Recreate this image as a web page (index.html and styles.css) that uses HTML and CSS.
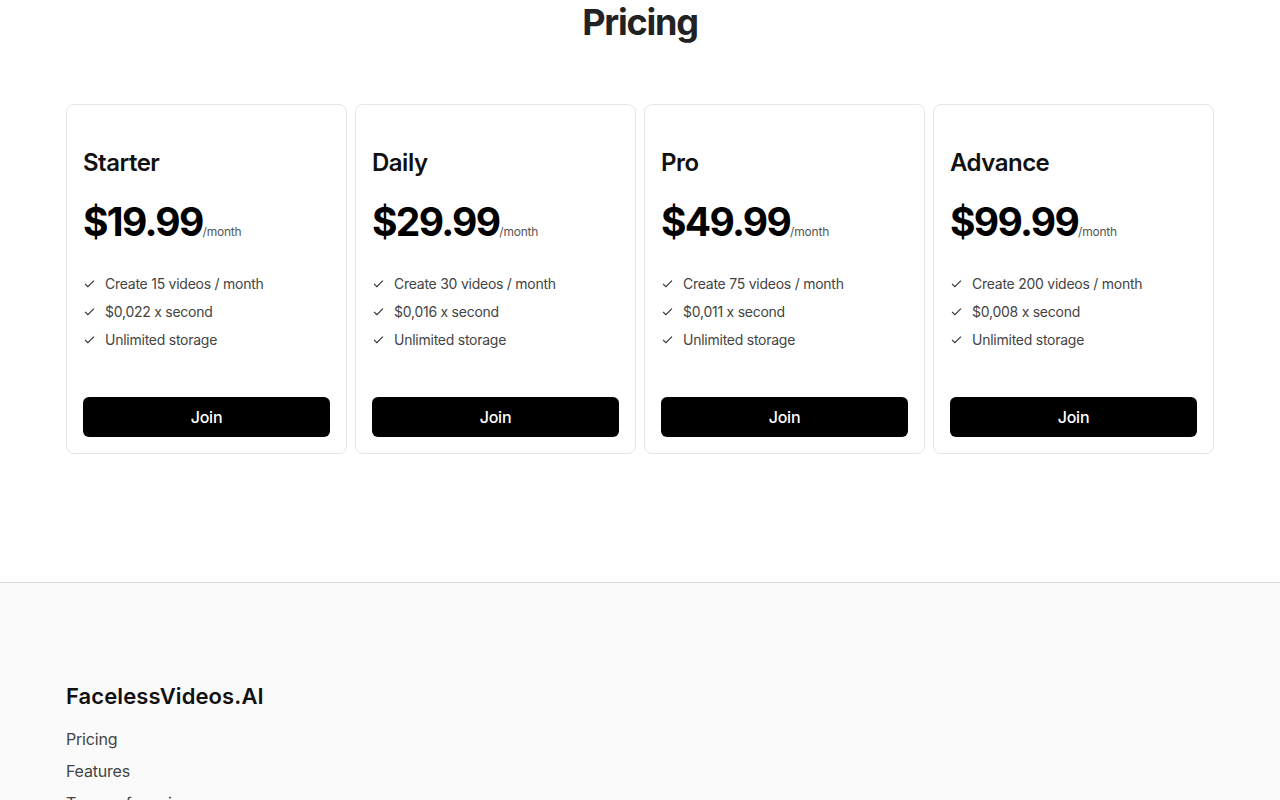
FILE: index.html
```html
<html>
<head>
<meta charset="utf-8">
<link rel="stylesheet" href="styles.css">
</head>
<body>
	<section class="pricing">
		<h1>Pricing</h1>

		<div class="plans">
			<div class="plan">
				<div class="badge"></div>
				<h2>Starter</h2>
				<div class="price">$19.99<span>/month</span></div>
				<ul>
					<li><svg viewBox="0 0 16 16"><path d="M2.5 8.5l3.5 3.5 7.5-7.5"/></svg>Create 15 videos / month</li>
					<li><svg viewBox="0 0 16 16"><path d="M2.5 8.5l3.5 3.5 7.5-7.5"/></svg>$0,022 x second</li>
					<li><svg viewBox="0 0 16 16"><path d="M2.5 8.5l3.5 3.5 7.5-7.5"/></svg>Unlimited storage</li>
				</ul>
				<button>Join</button>
			</div>

			<div class="plan">
				<div class="badge"></div>
				<h2>Daily</h2>
				<div class="price">$29.99<span>/month</span></div>
				<ul>
					<li><svg viewBox="0 0 16 16"><path d="M2.5 8.5l3.5 3.5 7.5-7.5"/></svg>Create 30 videos / month</li>
					<li><svg viewBox="0 0 16 16"><path d="M2.5 8.5l3.5 3.5 7.5-7.5"/></svg>$0,016 x second</li>
					<li><svg viewBox="0 0 16 16"><path d="M2.5 8.5l3.5 3.5 7.5-7.5"/></svg>Unlimited storage</li>
				</ul>
				<button>Join</button>
			</div>

			<div class="plan">
				<div class="badge"></div>
				<h2>Pro</h2>
				<div class="price">$49.99<span>/month</span></div>
				<ul>
					<li><svg viewBox="0 0 16 16"><path d="M2.5 8.5l3.5 3.5 7.5-7.5"/></svg>Create 75 videos / month</li>
					<li><svg viewBox="0 0 16 16"><path d="M2.5 8.5l3.5 3.5 7.5-7.5"/></svg>$0,011 x second</li>
					<li><svg viewBox="0 0 16 16"><path d="M2.5 8.5l3.5 3.5 7.5-7.5"/></svg>Unlimited storage</li>
				</ul>
				<button>Join</button>
			</div>

			<div class="plan">
				<div class="badge"></div>
				<h2>Advance</h2>
				<div class="price">$99.99<span>/month</span></div>
				<ul>
					<li><svg viewBox="0 0 16 16"><path d="M2.5 8.5l3.5 3.5 7.5-7.5"/></svg>Create 200 videos / month</li>
					<li><svg viewBox="0 0 16 16"><path d="M2.5 8.5l3.5 3.5 7.5-7.5"/></svg>$0,008 x second</li>
					<li><svg viewBox="0 0 16 16"><path d="M2.5 8.5l3.5 3.5 7.5-7.5"/></svg>Unlimited storage</li>
				</ul>
				<button>Join</button>
			</div>
		</div>
	</section>

	<footer>
		<div class="brand">FacelessVideos.AI</div>
		<nav>
			<a href="#">Pricing</a>
			<a href="#">Features</a>
			<a href="#">Terms of service</a>
			<a href="#">Privacy policy</a>
		</nav>
	</footer>
</body>
</html>
```

FILE: styles.css
```css
body {
	margin: 0;
	font-family: Inter, 'Noto Sans', sans-serif;
	font-size: 16px;
	color: #111;
	background: #fff;
}

.pricing {
	padding: 0 66px 128px;
}

h1 {
	margin: 0;
	text-align: center;
	font-size: 36px;
	line-height: 44px;
	font-weight: 700;
	letter-spacing: -1.2px;
	color: #222;
}

.plans {
	display: grid;
	grid-template-columns: repeat(4, 1fr);
	gap: 8px;
	margin-top: 60px;
}

.plan {
	display: flex;
	flex-direction: column;
	padding: 16px;
	border: 1px solid #e6e6e6;
	border-radius: 8px;
}

.badge {
	height: 26px;
}

.plan h2 {
	margin: 0;
	font-size: 24px;
	line-height: 32px;
	font-weight: 600;
	letter-spacing: -0.5px;
	color: #111;
}

.price {
	margin-top: 19px;
	font-size: 39px;
	line-height: 48px;
	font-weight: 700;
	letter-spacing: -1.7px;
	color: #000;
}

.price span {
	font-size: 12px;
	font-weight: 400;
	letter-spacing: -0.2px;
	color: #555;
}

.plan ul {
	list-style: none;
	margin: 13px 0 0;
	padding: 0;
}

.plan li {
	display: flex;
	align-items: center;
	height: 28px;
	font-size: 14px;
	letter-spacing: -0.25px;
	color: #444;
}

.plan li svg {
	width: 13px;
	height: 13px;
	margin: 0 9px 0 0;
	fill: none;
	stroke: #333;
	stroke-width: 1.4;
}

.plan button {
	margin-top: 44px;
	height: 40px;
	border: none;
	border-radius: 6px;
	background: #000;
	color: #fff;
	font-family: inherit;
	font-size: 16px;
	font-weight: 500;
	letter-spacing: -0.2px;
	cursor: pointer;
}

footer {
	border-top: 1px solid #d9d9d9;
	background: #fafafa;
	padding: 99px 66px 40px;
}

.brand {
	font-size: 22px;
	line-height: 28px;
	font-weight: 600;
	letter-spacing: 0.1px;
	color: #111;
}

footer nav {
	display: flex;
	flex-direction: column;
	gap: 8px;
	margin-top: 17px;
}

footer nav a {
	font-size: 16px;
	line-height: 24px;
	letter-spacing: -0.2px;
	color: #444;
	text-decoration: none;
}
```
